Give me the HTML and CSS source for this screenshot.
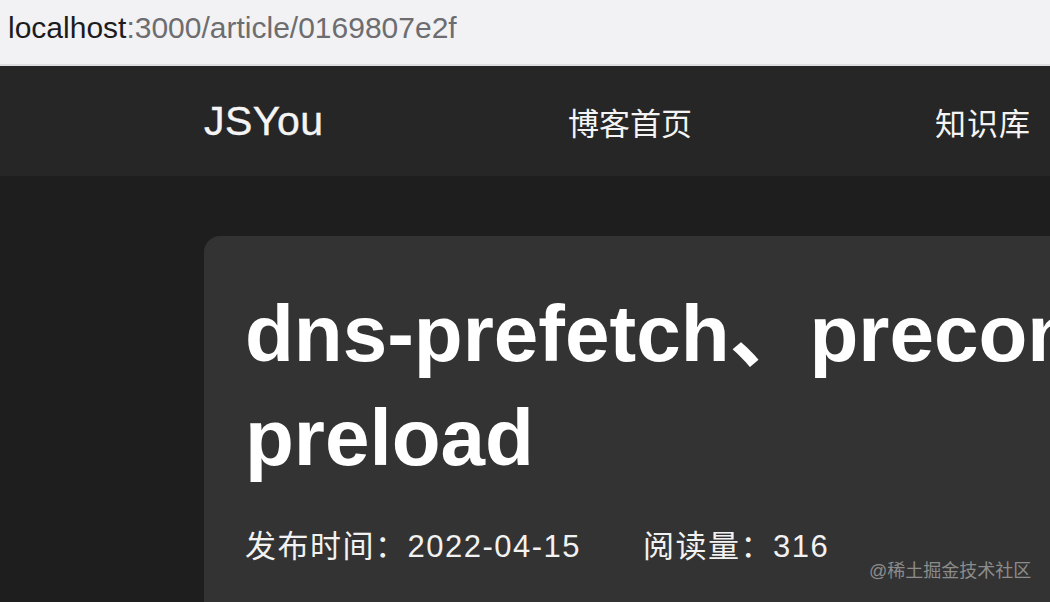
FILE: index.html
```html
<!doctype html>
<html lang="zh-CN">

<head>
    <meta charset="UTF-8" />
    <meta name="viewport" content="width=device-width, initial-scale=1.0" />
    <title>dns-prefetch、preconnect、prefetch、preload - JSYou</title>
    <link rel="stylesheet" href="styles.css">
</head>

<body>
    <div class="addressbar">
        <span class="addressbar__host">localhost</span><span class="addressbar__path">:3000/article/0169807e2f</span>
    </div>
    <header class="header">
        <nav class="nav">
            <a class="nav__item nav__item--logo" href="#">JSYou</a>
            <a class="nav__item" href="#">博客首页</a>
            <a class="nav__item" href="#">知识库</a>
        </nav>
    </header>
    <div class="content">
        <article class="article">
            <h1 class="article__title">dns-prefetch、preconnect、prefetch、preload</h1>
            <p class="article__meta">
                <span>发布时间：2022-04-15</span>
                <span>阅读量：316</span>
            </p>
        </article>
    </div>
    <div class="watermark">@稀土掘金技术社区</div>
</body>

</html>
```

FILE: styles.css
```css
:root {
    --bar-bg: #f2f2f4;
    --header-bg: #262626;
    --page-bg: #1e1e1e;
    --card-bg: #333333;
    --text-color: #ffffff;
}

* {
    margin: 0;
    padding: 0;
    box-sizing: border-box;
}

html,
body {
    height: 100%;
}

body {
    font-family: 'Liberation Sans', 'Noto Sans CJK SC', sans-serif;
    background: var(--page-bg);
    color: var(--text-color);
    overflow: hidden;
    position: relative;
}

.addressbar {
    height: 66px;
    padding: 10px 8px 0;
    background: var(--bar-bg);
    border-bottom: 2px solid #dedee0;
    font-size: 30px;
    line-height: 36px;
    white-space: nowrap;
}

.addressbar__host {
    color: #1c1c1e;
}

.addressbar__path {
    color: #6d6d70;
}

.header {
    height: 110px;
    background: var(--header-bg);
    display: flex;
    align-items: center;
    padding-left: 204px;
}

.nav {
    display: flex;
    align-items: center;
    white-space: nowrap;
}

.nav__item {
    width: 364px;
    flex: none;
    color: #f4f4f4;
    text-decoration: none;
    font-size: 31px;
}

.nav__item:last-child {
    margin-left: 3px;
    letter-spacing: 1px;
}

.nav__item--logo {
    font-size: 41px;
    letter-spacing: 0.5px;
    -webkit-text-stroke: 0.4px #f4f4f4;
}

.content {
    padding: 60px 0 0 204px;
}

.article {
    width: 1600px;
    min-height: 600px;
    padding: 46px 41px;
    background: var(--card-bg);
    border-radius: 16px;
}

.article__title {
    font-size: 80px;
    line-height: 104px;
    font-weight: bold;
}

.article__meta {
    display: flex;
    gap: 62px;
    margin-top: 33px;
    font-size: 31px;
    line-height: 48px;
    letter-spacing: 1.5px;
    color: #f2f2f2;
}

.watermark {
    position: absolute;
    left: 869px;
    top: 560px;
    font-size: 18px;
    line-height: 22px;
    color: #8c8c8c;
}
```
